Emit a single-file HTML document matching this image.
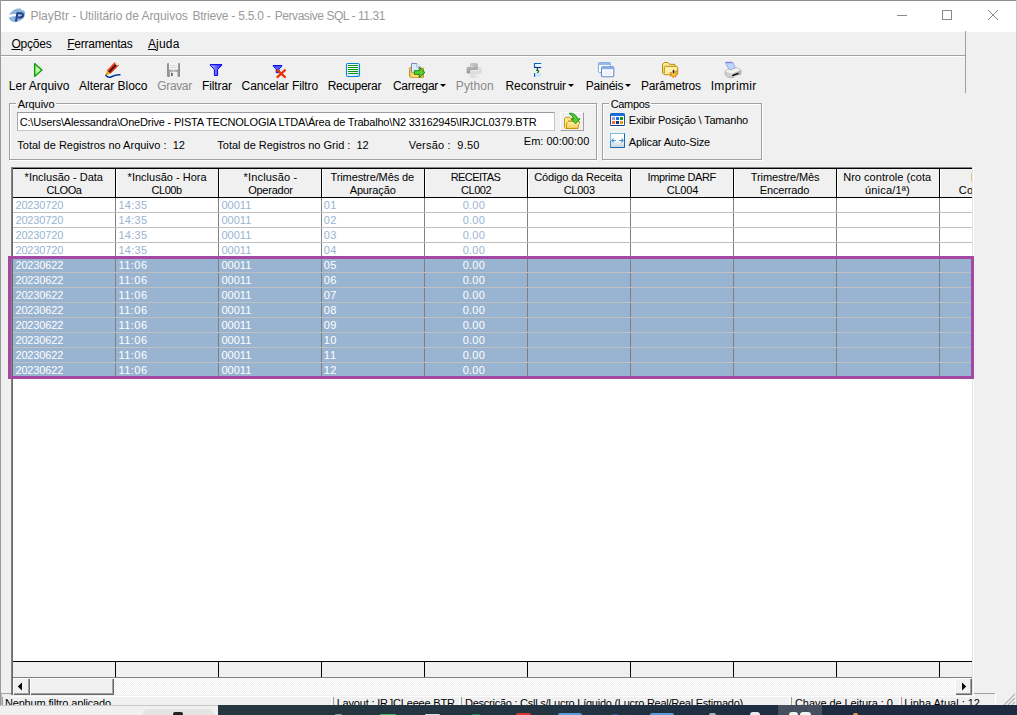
<!DOCTYPE html><html lang="pt"><head><meta charset="utf-8"><title>PlayBtr</title><style>
html,body{margin:0;padding:0}
body{width:1017px;height:715px;overflow:hidden;background:#f0f0f0;position:relative;font-family:"Liberation Sans",sans-serif;font-size:11px;color:#000}
.a{position:absolute}
.t{position:absolute;white-space:pre;font-size:11px;line-height:14px;height:14px}
.s{position:absolute;white-space:pre;font-size:12px;line-height:16px;height:16px}
.gb{position:absolute;border:1px solid #a0a0a0;box-shadow:1px 1px 0 #fff, inset 1px 1px 0 #fff}
.ic{position:absolute;top:62px;width:16px;height:16px;overflow:visible}
u{text-decoration:underline;text-underline-offset:1px;text-decoration-thickness:1px}
</style></head><body>
<div class="a" style="left:0;top:0;width:1017px;height:1px;background:#8e8e8e"></div>
<div class="a" style="left:0;top:0;width:1px;height:705px;background:#9a9a9a"></div>
<div class="a" style="left:1016px;top:0;width:1px;height:705px;background:#c8c8c8"></div>
<div class="a" style="left:1px;top:1px;width:1015px;height:31px;background:#fff"></div>
<div class="s" id="x0" style="left:30.5px;top:8px;color:#9a9a9a;letter-spacing:-0.045px">PlayBtr - Utilitário de Arquivos</div>
<div class="s" id="x1" style="left:192.5px;top:8px;color:#9a9a9a;letter-spacing:-0.237px">Btrieve - 5.5.0 -</div>
<div class="s" id="x2" style="left:274.7px;top:8px;color:#9a9a9a;letter-spacing:-0.433px">Pervasive SQL - 11.31</div>
<svg class="a" style="left:8px;top:7px" width="18" height="17" viewBox="8 7 18 17"><defs><linearGradient id="gti" x1="0" x2="1"><stop offset="0" stop-color="#fff"/><stop offset="0.55" stop-color="#fff" stop-opacity="0.900"/><stop offset="1" stop-color="#fff" stop-opacity="0"/></linearGradient></defs><ellipse cx="17" cy="15.300" rx="8.600" ry="6.300" fill="#8db5dc" transform="rotate(-28 17 15.300)"/><path d="M20.500 8.500Q21.500 11 25 10.500L24 8Z" fill="#fff"/><path d="M9 14.800Q14 13.600 21 14.300V16.200Q14 15.800 9 17.500Z" fill="url(#gti)"/><path d="M15.900 21.500L17.400 13.300H20.500Q23.700 13.300 23 15.600Q22.200 18 18 17.500" fill="none" stroke="#213f88" stroke-width="2"/></svg>
<svg class="a" style="left:890px;top:5px" width="120" height="22" viewBox="0 0 120 22"><g stroke="#8a8a8a" fill="none" stroke-width="1"><path d="M7 10.500H17"/><rect x="52.500" y="5.500" width="9" height="9"/><path d="M98 5L108 15M108 5L98 15"/></g></svg>
<div class="s" id="x3" style="left:11.4px;top:36px;letter-spacing:-0.179px"><u>O</u>pções</div>
<div class="s" id="x4" style="left:67.3px;top:36px;letter-spacing:-0.268px"><u>F</u>erramentas</div>
<div class="s" id="x5" style="left:147.9px;top:36px;letter-spacing:0.199px"><u>A</u>juda</div>
<div class="a" style="left:1px;top:55px;width:965px;height:1px;background:#a0a0a0"></div>
<div class="a" style="left:1px;top:56px;width:964px;height:1px;background:#fff"></div>
<div class="a" style="left:965px;top:31px;width:1px;height:62px;background:#a0a0a0"></div>
<svg class="ic" style="left:30px" viewBox="0 0 16 16"><defs><radialGradient id="gp" cx="0.45" cy="0.5" r="0.6"><stop offset="0" stop-color="#d8ffd0"/><stop offset="1" stop-color="#70e048"/></radialGradient></defs><path d="M4.600 1.600L12 8L4.600 14.400Z" fill="url(#gp)" stroke="#0c9c0c" stroke-width="1.300" stroke-linejoin="round"/></svg>
<div class="s" id="x6" style="left:8.8px;top:78px;color:#000;letter-spacing:-0.009px">Ler Arquivo</div>
<svg class="ic" style="left:105px" viewBox="0 0 16 16"><path d="M2 8.400L9.400 0.400L14 3.200L5.400 11.800Z" fill="#d42c10"/><path d="M2 8.400L9.400 0.400L10.600 1.100L3 9.500Z" fill="#f04a20"/><path d="M3.300 9.900L11 1.500L12.100 2.200L4.400 10.700Z" fill="#1a0a08"/><path d="M10.300 1.500L12.900 3.300" stroke="#fff" stroke-width="1.100"/><path d="M2 8.400L5.400 11.800L0.300 13.400Z" fill="#e8a800"/><path d="M0.300 13.400L1.500 12.200L1.900 12.900Z" fill="#202040"/><path d="M0.500 13.200Q3.500 16.500 7 14.500T15.500 12.800" stroke="#0c3a9c" fill="none" stroke-width="1.500"/></svg>
<div class="s" id="x7" style="left:79.0px;top:78px;color:#000;letter-spacing:-0.016px">Alterar Bloco</div>
<svg class="ic" style="left:165px" viewBox="0 0 16 16"><defs><linearGradient id="gs" x1="0" x2="1"><stop offset="0" stop-color="#8c8c8c"/><stop offset="0.5" stop-color="#bdbdbd"/><stop offset="1" stop-color="#8a8a8a"/></linearGradient></defs><rect x="2" y="1" width="13" height="14" rx="1.300" fill="url(#gs)"/><rect x="4" y="1" width="9" height="6.700" fill="#f6f6f6"/><path d="M5 3.500H12M5 5.500H12" stroke="#d8d8d8" stroke-width="1"/><rect x="5" y="9.800" width="7.500" height="5.200" fill="#f2f2f2"/><rect x="6" y="10.800" width="1.800" height="3.200" fill="#6a6a6a"/></svg>
<div class="s" id="x8" style="left:157.3px;top:78px;color:#8a8a8a;letter-spacing:-0.365px">Gravar</div>
<svg class="ic" style="left:208px" viewBox="0 0 16 16"><defs><linearGradient id="gf" x1="0" x2="1"><stop offset="0" stop-color="#b8b8ff"/><stop offset="1" stop-color="#2020f0"/></linearGradient></defs><path d="M2.300 2.500H13.700V3.500L9.600 7.300V13.500H6.400V7.300L2.300 3.500Z" fill="url(#gf)" stroke="#0a0ae8" stroke-width="1" stroke-linejoin="round"/><path d="M2 2.600H14" stroke="#1010f0" stroke-width="1.200"/></svg>
<div class="s" id="x9" style="left:201.9px;top:78px;color:#000;letter-spacing:-0.082px">Filtrar</div>
<svg class="ic" style="left:272px" viewBox="0 0 16 16"><path d="M1.200 3.500H9.800V4.300L7 7V10.700H4.200V7L1.200 4.300Z" fill="#5060f8" stroke="#0808e8" stroke-width="0.900" stroke-linejoin="round"/><path d="M1 3.600H10" stroke="#0808e8" stroke-width="1.200"/><path d="M4.800 7.600L13.600 15.600M13.600 7.600L4.800 15.600" stroke="#ec3000" stroke-width="2.100"/></svg>
<div class="s" id="x10" style="left:241.6px;top:78px;color:#000;letter-spacing:-0.109px">Cancelar Filtro</div>
<svg class="ic" style="left:345px" viewBox="0 0 16 16"><defs><linearGradient id="gr" x1="0" y1="0" x2="1" y2="1"><stop offset="0.3" stop-color="#ffffff"/><stop offset="1" stop-color="#b8dcff"/></linearGradient></defs><rect x="1.500" y="1.500" width="13" height="13" rx="1.600" fill="url(#gr)" stroke="#0a80d8" stroke-width="1.100"/><path d="M3.300 3.500H12.700M3.300 5.500H12.700M3.300 7.500H12.700M3.300 9.500H12.700M3.300 11.500H12.700" stroke="#0c960c" stroke-width="1.100" stroke-linecap="round"/></svg>
<div class="s" id="x11" style="left:327.7px;top:78px;color:#000;letter-spacing:-0.281px">Recuperar</div>
<svg class="ic" style="left:408px" viewBox="0 0 16 16"><path d="M1.500 6.200L2.700 5H5L6 6.200H15.500V15.300H2.500L1.500 14.300Z" fill="#f7c548" stroke="#bf8a14" stroke-width="0.900"/><path d="M3.500 1.500H8.800L12.300 5V10.500H3.500Z" fill="#d8ecff" stroke="#7878c0" stroke-width="0.900"/><path d="M8.800 1.500V5H12.300" fill="#fff" stroke="#8890c8" stroke-width="0.700"/><path d="M3.200 10.500H12.500V15H3.200Z" fill="#fcd968"/><path d="M6.300 8.700H11.200V5.300L16.900 10.400L11.200 15.600V12.300H6.300Z" fill="#58d030" stroke="#0a780a" stroke-width="0.900" stroke-linejoin="round"/></svg>
<div class="s" id="x12" style="left:392.9px;top:78px;color:#000;letter-spacing:-0.270px">Carregar</div>
<svg class="ic" style="left:465px" viewBox="0 0 16 16"><defs><linearGradient id="gy" x1="0" y1="0" x2="0" y2="1"><stop offset="0" stop-color="#c4c4c4"/><stop offset="1" stop-color="#989898"/></linearGradient></defs><path d="M6.500 1H11.500Q13 1 13 2.500V6.500Q13 8 11.500 8H6.500Q5 8 5 9.500V11.500H3Q1.600 11.500 1.600 10V6.200Q1.600 4.700 3 4.700H8.500V4H5V2.500Q5 1 6.500 1Z" fill="url(#gy)"/><path d="M11.500 15.800H6.500Q5 15.800 5 14.300V10.300Q5 8.800 6.500 8.800H11.500Q13 8.800 13 7.300V5.300H15.300Q16.800 5.300 16.800 6.800V10.600Q16.800 12.100 15.300 12.100H9.500V12.800H13V14.300Q13 15.800 11.500 15.800Z" fill="#dedede"/><rect x="6.200" y="2" width="1.600" height="1.200" fill="#d4d4d4"/><rect x="10.200" y="13.500" width="1.600" height="1.200" fill="#f4f4f4"/></svg>
<div class="s" id="x13" style="left:455.8px;top:78px;color:#8a8a8a;letter-spacing:0.107px">Python</div>
<svg class="ic" style="left:529px" viewBox="0 0 16 16"><rect x="5.500" y="1.500" width="7.500" height="4" fill="#eaf6ff"/><path d="M12.200 1.500H5.500V5.600" stroke="#0860d0" stroke-width="1.100" fill="none"/><path d="M5 5.500H12.200" stroke="#0a2a98" stroke-width="1.100"/><path d="M8.500 6V8.500M7 8.300Q9.800 8 9.500 9.600L8.300 10.800" stroke="#0a6a0a" stroke-width="1.200" fill="none"/><rect x="5" y="11" width="1.200" height="4" fill="#0860d0"/><rect x="7" y="11" width="5" height="4" fill="#cfe6ff"/></svg>
<div class="s" id="x14" style="left:505.5px;top:78px;color:#000;letter-spacing:-0.078px">Reconstruir</div>
<svg class="ic" style="left:597px" viewBox="0 0 16 16"><rect x="1.400" y="0.500" width="12" height="10" rx="1.200" fill="#fff" stroke="#7fa4dc" stroke-width="1"/><path d="M1.400 1.700Q1.400 0.500 2.600 0.500H12.200Q13.400 0.500 13.400 1.700V3H1.400Z" fill="#92b6e8"/><rect x="4.500" y="4.700" width="12.300" height="10" rx="1.200" fill="#fff" stroke="#5f88cc" stroke-width="1.100"/><path d="M4.500 5.900Q4.500 4.700 5.700 4.700H15.600Q16.800 4.700 16.800 5.900V7.300H4.500Z" fill="#86aee6"/><rect x="6.500" y="8.500" width="8.500" height="4.500" fill="#eef3fb"/></svg>
<div class="s" id="x15" style="left:585.8px;top:78px;color:#000;letter-spacing:-0.280px">Painéis</div>
<svg class="ic" style="left:662px" viewBox="0 0 16 16"><path d="M0.500 2.200L2.200 0.500H6L7.500 2.300H12.800V4.300H14.800L15.700 5.200V11L14 12.700H2.200L0.500 11Z" fill="#fbe894" stroke="#b88c10" stroke-width="1"/><path d="M2.300 11.500V5L3 4.300H12.800" fill="none" stroke="#b88c10" stroke-width="1"/><path d="M3 5H14.500V11.800H3Z" fill="#fdf0a8"/><path d="M11.500 7.500L12.600 9.600L14.800 8.800L14.200 11L16 12.300L13.900 13L14 15.300L12.100 14.100L11 16L10.300 13.900L8 14.200L9.300 12.300L7.700 10.600L10 10.500Z" fill="#f8a818" stroke="#d86a10" stroke-width="0.500"/><circle cx="11.600" cy="11.800" r="1.800" fill="#ffd840"/><rect x="10.900" y="8.200" width="1.300" height="3.400" fill="#1c2c78"/></svg>
<div class="s" id="x16" style="left:640.9px;top:78px;color:#000;letter-spacing:-0.203px">Parâmetros</div>
<svg class="ic" style="left:725px" viewBox="0 0 16 16"><path d="M0.600 1Q0.300 0.200 1.300 0.200H7.200Q8 0.200 8.300 1L10.300 6.200L4.500 8.200Z" fill="#b8d8ff" stroke="#8a8ad8" stroke-width="0.700"/><path d="M0.500 0.700H7.500" stroke="#7a7acc" stroke-width="1"/><path d="M0 9.200L4 6.800L4.500 8.200L10.300 6.200L11.500 5.600L16 8V12.200L7.500 15.800L3 15.300L0 12.600Z" fill="#d0d0d0" stroke="#9a9a9a" stroke-width="0.600"/><path d="M0.300 9.200L4 7.200L4.500 8.400L10.300 6.500L11.500 5.900L15.700 8.100L7.300 11.800Z" fill="#f2f2f2"/><path d="M7.300 12V15.700L15.800 12.100V8.200Z" fill="#b4b4b4"/><path d="M7.300 13.700L13.500 11.300" stroke="#000" stroke-width="1.300"/><path d="M8.500 15.200L13.500 13.300" stroke="#ececec" stroke-width="1"/></svg>
<div class="s" id="x17" style="left:710.7px;top:78px;color:#000;letter-spacing:0.309px">Imprimir</div>
<div class="a" style="left:440px;top:84px;width:0;height:0;border-left:3px solid transparent;border-right:3px solid transparent;border-top:3px solid #000"></div>
<div class="a" style="left:568px;top:84px;width:0;height:0;border-left:3px solid transparent;border-right:3px solid transparent;border-top:3px solid #000"></div>
<div class="a" style="left:625px;top:84px;width:0;height:0;border-left:3px solid transparent;border-right:3px solid transparent;border-top:3px solid #000"></div>
<div class="gb" style="left:9px;top:103px;width:586px;height:55px"></div>
<div class="a" style="left:16px;top:103px;width:40px;height:2px;background:#f0f0f0"></div>
<div class="t" id="x18" style="left:17.7px;top:97px;letter-spacing:-0.071px">Arquivo</div>
<div class="a" style="left:17px;top:112px;width:536px;height:17px;background:#fff;border:1px solid #7a7a7a;border-color:#9a9aa2 #c4c4cc #c4c4cc #a6a6ae"></div>
<div class="t" id="x19" style="left:19.7px;top:115px;letter-spacing:-0.190px">C:\Users\Alessandra\OneDrive - PISTA TECNOLOGIA LTDA\Área de Trabalho\N2 33162945\IRJCL0379.BTR</div>
<div class="a" style="left:560px;top:112px;width:22px;height:17px;background:#f0f0f0;border:1px solid #fff;border-color:#fff #a0a0a0 #a0a0a0 #fff"></div>
<svg class="a" style="left:560px;top:112px;overflow:visible" width="24" height="19" viewBox="0 0 24 19"><defs><linearGradient id="gfo" x1="0" y1="0" x2="0" y2="1"><stop offset="0" stop-color="#fff6b8"/><stop offset="1" stop-color="#f6c850"/></linearGradient></defs><path d="M4.500 6.500L5.700 5.300H9.500L10.700 6.500H17.300V9H4.500Z" fill="#fbe68a" stroke="#c8960c" stroke-width="1"/><path d="M4.500 7V15.500L5.500 16.500H17.500" fill="none" stroke="#c8960c" stroke-width="1"/><path d="M5 7.500H8V16H5Z" fill="#fbe68a"/><path d="M7.300 10.300L8.300 9.300H19.500V11.500L18.300 13V16.500H6.500V12Z" fill="url(#gfo)" stroke="#c8960c" stroke-width="1" stroke-linejoin="round"/><path d="M9 1.300H12.500Q16.500 3 17.800 7L20 6.800L15.600 11.800L11.200 7.300L13.700 7.200Q12.500 3.200 9 1.300Z" fill="#58cc38" stroke="#0c8c0c" stroke-width="0.900" stroke-linejoin="round"/></svg>
<div class="t" id="x20" style="left:17.3px;top:138px;letter-spacing:0.002px">Total de Registros no Arquivo :  12</div>
<div class="t" id="x21" style="left:217.3px;top:138px;letter-spacing:-0.008px">Total de Registros no Grid :  12</div>
<div class="t" id="x22" style="left:408.8px;top:138px;letter-spacing:0.208px">Versão :  9.50</div>
<div class="t" id="x23" style="left:523.8px;top:134px;letter-spacing:0.005px">Em: 00:00:00</div>
<div class="gb" style="left:602px;top:103px;width:158px;height:55px"></div>
<div class="a" style="left:609px;top:103px;width:42px;height:2px;background:#f0f0f0"></div>
<div class="t" id="x24" style="left:610.7px;top:97px;letter-spacing:-0.328px">Campos</div>
<div class="a" style="left:609px;top:126px;width:17px;height:2px;background:#fff"></div>
<svg class="a" style="left:610px;top:113px" width="15" height="13" viewBox="0 0 15 13"><rect x="0.500" y="0.500" width="14" height="12" rx="0.800" fill="#fff" stroke="#1c50a8"/><path d="M0.500 1.300Q0.500 0.500 1.300 0.500H13.700Q14.500 0.500 14.500 1.300V3H0.500Z" fill="#1a70dc"/><path d="M0.500 12.500H14.500" stroke="#123c90"/><rect x="2" y="4" width="3" height="3" fill="#9c9cd8"/><rect x="6" y="4" width="3" height="3" fill="#1878e0"/><rect x="10" y="4" width="3" height="3" fill="#129c12"/><rect x="2" y="8" width="3" height="3" fill="#ff6830"/><rect x="6" y="8" width="3" height="3" fill="#12309c"/><rect x="10" y="8" width="3" height="3" fill="#dca010"/></svg>
<div class="t" id="x25" style="left:628.8px;top:113px;letter-spacing:-0.197px">Exibir Posição \ Tamanho</div>
<svg class="a" style="left:610px;top:133px" width="15" height="15" viewBox="0 0 15 15"><defs><linearGradient id="gau" x1="0" y1="0" x2="0" y2="1"><stop offset="0.4" stop-color="#fff"/><stop offset="1" stop-color="#c4d4e0"/></linearGradient></defs><rect x="0.500" y="0.500" width="14" height="14" fill="url(#gau)" stroke="#80bce8"/><path d="M0.500 14.500H14.500V0.500" fill="none" stroke="#1c68b4"/><path d="M0.500 8V14.500" stroke="#3c88cc"/><path d="M1.800 7.500H5.800M3.600 5.500L1.800 7.500L3.600 9.500M9.200 7.500H13.200M11.400 5.500L13.200 7.500L11.400 9.500" stroke="#4690d4" fill="none" stroke-width="1.100"/></svg>
<div class="t" id="x26" style="left:628.8px;top:135px;letter-spacing:-0.151px">Aplicar Auto-Size</div>
<div class="a" style="left:11px;top:167px;width:962px;height:528px;background:#fff"></div>
<div class="a" style="left:972px;top:167px;width:1px;height:528px;background:#e3e3e3"></div>
<div class="a" style="left:973px;top:167px;width:1px;height:529px;background:#fff"></div>
<div class="a" style="left:11px;top:167px;width:961px;height:1px;background:#828282"></div>
<div class="a" style="left:11px;top:167px;width:1px;height:528px;background:#828282"></div>
<div class="a" style="left:12px;top:168px;width:960px;height:1px;background:#000"></div>
<div class="a" style="left:12px;top:168px;width:1px;height:527px;background:#696969"></div>
<div class="a" style="left:13px;top:169px;width:959px;height:28px;background:#f0f0f0"></div>
<div class="a" style="left:13px;top:197px;width:959px;height:1px;background:#000"></div>
<div class="t" id="x27" style="left:24.6px;top:170px;letter-spacing:0.008px">*Inclusão - Data</div>
<div class="t" id="x28" style="left:46.6px;top:183px;letter-spacing:-0.519px">CLOOa</div>
<div class="t" id="x29" style="left:127.6px;top:170px;letter-spacing:0.008px">*Inclusão - Hora</div>
<div class="t" id="x30" style="left:151.4px;top:183px;letter-spacing:-0.404px">CL00b</div>
<div class="t" id="x31" style="left:243.6px;top:170px;letter-spacing:0.156px">*Inclusão -</div>
<div class="t" id="x32" style="left:248.2px;top:183px;letter-spacing:-0.248px">Operador</div>
<div class="t" id="x33" style="left:330.5px;top:170px;letter-spacing:-0.098px">Trimestre/Mês de</div>
<div class="t" id="x34" style="left:349.7px;top:183px;letter-spacing:-0.137px">Apuração</div>
<div class="t" id="x35" style="left:450.7px;top:170px;letter-spacing:-0.588px">RECEITAS</div>
<div class="t" id="x36" style="left:460.9px;top:183px;letter-spacing:-0.404px">CL002</div>
<div class="t" id="x37" style="left:534.3px;top:170px;letter-spacing:-0.154px">Código da Receita</div>
<div class="t" id="x38" style="left:563.7px;top:183px;letter-spacing:-0.264px">CL003</div>
<div class="t" id="x39" style="left:647.5px;top:170px;letter-spacing:-0.353px">Imprime DARF</div>
<div class="t" id="x40" style="left:666.7px;top:183px;letter-spacing:-0.204px">CL004</div>
<div class="t" id="x41" style="left:750.8px;top:170px;letter-spacing:-0.090px">Trimestre/Mês</div>
<div class="t" id="x42" style="left:759.7px;top:183px;letter-spacing:-0.130px">Encerrado</div>
<div class="t" id="x43" style="left:843.2px;top:170px;letter-spacing:0.031px">Nro controle (cota</div>
<div class="t" id="x44" style="left:864.9px;top:183px;letter-spacing:0.209px">única/1ª)</div>
<div class="a" style="left:958px;top:183px;width:14px;height:14px;overflow:hidden"><div class="t" id="x45" style="left:0.7px;top:0px;letter-spacing:0.369px">Co</div></div>
<div class="a" style="left:971px;top:173px;width:1px;height:8px;background:#ecc078"></div>
<div class="a" style="left:115px;top:169px;width:1px;height:29px;background:#000"></div>
<div class="a" style="left:116px;top:169px;width:1px;height:28px;background:#fff"></div>
<div class="a" style="left:115px;top:198px;width:1px;height:180px;background:#808080"></div>
<div class="a" style="left:218px;top:169px;width:1px;height:29px;background:#000"></div>
<div class="a" style="left:219px;top:169px;width:1px;height:28px;background:#fff"></div>
<div class="a" style="left:218px;top:198px;width:1px;height:180px;background:#808080"></div>
<div class="a" style="left:321px;top:169px;width:1px;height:29px;background:#000"></div>
<div class="a" style="left:322px;top:169px;width:1px;height:28px;background:#fff"></div>
<div class="a" style="left:321px;top:198px;width:1px;height:180px;background:#808080"></div>
<div class="a" style="left:424px;top:169px;width:1px;height:29px;background:#000"></div>
<div class="a" style="left:425px;top:169px;width:1px;height:28px;background:#fff"></div>
<div class="a" style="left:424px;top:198px;width:1px;height:180px;background:#808080"></div>
<div class="a" style="left:527px;top:169px;width:1px;height:29px;background:#000"></div>
<div class="a" style="left:528px;top:169px;width:1px;height:28px;background:#fff"></div>
<div class="a" style="left:527px;top:198px;width:1px;height:180px;background:#808080"></div>
<div class="a" style="left:630px;top:169px;width:1px;height:29px;background:#000"></div>
<div class="a" style="left:631px;top:169px;width:1px;height:28px;background:#fff"></div>
<div class="a" style="left:630px;top:198px;width:1px;height:180px;background:#808080"></div>
<div class="a" style="left:733px;top:169px;width:1px;height:29px;background:#000"></div>
<div class="a" style="left:734px;top:169px;width:1px;height:28px;background:#fff"></div>
<div class="a" style="left:733px;top:198px;width:1px;height:180px;background:#808080"></div>
<div class="a" style="left:836px;top:169px;width:1px;height:29px;background:#000"></div>
<div class="a" style="left:837px;top:169px;width:1px;height:28px;background:#fff"></div>
<div class="a" style="left:836px;top:198px;width:1px;height:180px;background:#808080"></div>
<div class="a" style="left:939px;top:169px;width:1px;height:29px;background:#000"></div>
<div class="a" style="left:940px;top:169px;width:1px;height:28px;background:#fff"></div>
<div class="a" style="left:939px;top:198px;width:1px;height:180px;background:#808080"></div>
<div class="a" style="left:13px;top:258px;width:959px;height:120px;background:#99b4d1"></div>
<div class="a" style="left:115px;top:258px;width:1px;height:120px;background:#808080"></div>
<div class="a" style="left:218px;top:258px;width:1px;height:120px;background:#808080"></div>
<div class="a" style="left:321px;top:258px;width:1px;height:120px;background:#808080"></div>
<div class="a" style="left:424px;top:258px;width:1px;height:120px;background:#808080"></div>
<div class="a" style="left:527px;top:258px;width:1px;height:120px;background:#808080"></div>
<div class="a" style="left:630px;top:258px;width:1px;height:120px;background:#808080"></div>
<div class="a" style="left:733px;top:258px;width:1px;height:120px;background:#808080"></div>
<div class="a" style="left:836px;top:258px;width:1px;height:120px;background:#808080"></div>
<div class="a" style="left:939px;top:258px;width:1px;height:120px;background:#808080"></div>
<div class="a" style="left:13px;top:212px;width:959px;height:1px;background:#c0c0c0"></div>
<div class="a" style="left:13px;top:227px;width:959px;height:1px;background:#c0c0c0"></div>
<div class="a" style="left:13px;top:242px;width:959px;height:1px;background:#c0c0c0"></div>
<div class="a" style="left:13px;top:257px;width:959px;height:1px;background:#c0c0c0"></div>
<div class="a" style="left:13px;top:272px;width:959px;height:1px;background:#c0c0c0"></div>
<div class="a" style="left:13px;top:287px;width:959px;height:1px;background:#c0c0c0"></div>
<div class="a" style="left:13px;top:302px;width:959px;height:1px;background:#c0c0c0"></div>
<div class="a" style="left:13px;top:317px;width:959px;height:1px;background:#c0c0c0"></div>
<div class="a" style="left:13px;top:332px;width:959px;height:1px;background:#c0c0c0"></div>
<div class="a" style="left:13px;top:347px;width:959px;height:1px;background:#c0c0c0"></div>
<div class="a" style="left:13px;top:362px;width:959px;height:1px;background:#c0c0c0"></div>
<div class="a" style="left:13px;top:377px;width:959px;height:1px;background:#c0c0c0"></div>
<div class="t" id="x46" style="left:15.4px;top:198px;color:#99b4d1;letter-spacing:-0.132px">20230720</div>
<div class="t" id="x47" style="left:118.4px;top:198px;color:#99b4d1;letter-spacing:0.314px">14:35</div>
<div class="t" id="x48" style="left:221.4px;top:198px;color:#99b4d1;letter-spacing:0.024px">00011</div>
<div class="t" id="x49" style="left:323.8px;top:198px;color:#99b4d1;letter-spacing:0.375px">01</div>
<div class="t" id="x50" style="left:462.8px;top:198px;color:#99b4d1;letter-spacing:0.195px">0.00</div>
<div class="t" id="x51" style="left:15.4px;top:213px;color:#99b4d1;letter-spacing:-0.132px">20230720</div>
<div class="t" id="x52" style="left:118.4px;top:213px;color:#99b4d1;letter-spacing:0.314px">14:35</div>
<div class="t" id="x53" style="left:221.4px;top:213px;color:#99b4d1;letter-spacing:0.024px">00011</div>
<div class="t" id="x54" style="left:323.8px;top:213px;color:#99b4d1;letter-spacing:0.375px">02</div>
<div class="t" id="x55" style="left:462.8px;top:213px;color:#99b4d1;letter-spacing:0.195px">0.00</div>
<div class="t" id="x56" style="left:15.4px;top:228px;color:#99b4d1;letter-spacing:-0.132px">20230720</div>
<div class="t" id="x57" style="left:118.4px;top:228px;color:#99b4d1;letter-spacing:0.314px">14:35</div>
<div class="t" id="x58" style="left:221.4px;top:228px;color:#99b4d1;letter-spacing:0.024px">00011</div>
<div class="t" id="x59" style="left:323.8px;top:228px;color:#99b4d1;letter-spacing:0.375px">03</div>
<div class="t" id="x60" style="left:462.8px;top:228px;color:#99b4d1;letter-spacing:0.195px">0.00</div>
<div class="t" id="x61" style="left:15.4px;top:243px;color:#99b4d1;letter-spacing:-0.132px">20230720</div>
<div class="t" id="x62" style="left:118.4px;top:243px;color:#99b4d1;letter-spacing:0.314px">14:35</div>
<div class="t" id="x63" style="left:221.4px;top:243px;color:#99b4d1;letter-spacing:0.024px">00011</div>
<div class="t" id="x64" style="left:323.8px;top:243px;color:#99b4d1;letter-spacing:0.375px">04</div>
<div class="t" id="x65" style="left:462.8px;top:243px;color:#99b4d1;letter-spacing:0.195px">0.00</div>
<div class="t" id="x66" style="left:15.4px;top:258px;color:#fff;letter-spacing:-0.132px">20230622</div>
<div class="t" id="x67" style="left:118.4px;top:258px;color:#fff;letter-spacing:0.476px">11:06</div>
<div class="t" id="x68" style="left:221.4px;top:258px;color:#fff;letter-spacing:0.024px">00011</div>
<div class="t" id="x69" style="left:323.8px;top:258px;color:#fff;letter-spacing:0.375px">05</div>
<div class="t" id="x70" style="left:462.8px;top:258px;color:#fff;letter-spacing:0.195px">0.00</div>
<div class="t" id="x71" style="left:15.4px;top:273px;color:#fff;letter-spacing:-0.132px">20230622</div>
<div class="t" id="x72" style="left:118.4px;top:273px;color:#fff;letter-spacing:0.476px">11:06</div>
<div class="t" id="x73" style="left:221.4px;top:273px;color:#fff;letter-spacing:0.024px">00011</div>
<div class="t" id="x74" style="left:323.8px;top:273px;color:#fff;letter-spacing:0.375px">06</div>
<div class="t" id="x75" style="left:462.8px;top:273px;color:#fff;letter-spacing:0.195px">0.00</div>
<div class="t" id="x76" style="left:15.4px;top:288px;color:#fff;letter-spacing:-0.132px">20230622</div>
<div class="t" id="x77" style="left:118.4px;top:288px;color:#fff;letter-spacing:0.476px">11:06</div>
<div class="t" id="x78" style="left:221.4px;top:288px;color:#fff;letter-spacing:0.024px">00011</div>
<div class="t" id="x79" style="left:323.8px;top:288px;color:#fff;letter-spacing:0.375px">07</div>
<div class="t" id="x80" style="left:462.8px;top:288px;color:#fff;letter-spacing:0.195px">0.00</div>
<div class="t" id="x81" style="left:15.4px;top:303px;color:#fff;letter-spacing:-0.132px">20230622</div>
<div class="t" id="x82" style="left:118.4px;top:303px;color:#fff;letter-spacing:0.476px">11:06</div>
<div class="t" id="x83" style="left:221.4px;top:303px;color:#fff;letter-spacing:0.024px">00011</div>
<div class="t" id="x84" style="left:323.8px;top:303px;color:#fff;letter-spacing:0.375px">08</div>
<div class="t" id="x85" style="left:462.8px;top:303px;color:#fff;letter-spacing:0.195px">0.00</div>
<div class="t" id="x86" style="left:15.4px;top:318px;color:#fff;letter-spacing:-0.132px">20230622</div>
<div class="t" id="x87" style="left:118.4px;top:318px;color:#fff;letter-spacing:0.476px">11:06</div>
<div class="t" id="x88" style="left:221.4px;top:318px;color:#fff;letter-spacing:0.024px">00011</div>
<div class="t" id="x89" style="left:323.8px;top:318px;color:#fff;letter-spacing:0.375px">09</div>
<div class="t" id="x90" style="left:462.8px;top:318px;color:#fff;letter-spacing:0.195px">0.00</div>
<div class="t" id="x91" style="left:15.4px;top:333px;color:#fff;letter-spacing:-0.132px">20230622</div>
<div class="t" id="x92" style="left:118.4px;top:333px;color:#fff;letter-spacing:0.476px">11:06</div>
<div class="t" id="x93" style="left:221.4px;top:333px;color:#fff;letter-spacing:0.024px">00011</div>
<div class="t" id="x94" style="left:323.8px;top:333px;color:#fff;letter-spacing:0.375px">10</div>
<div class="t" id="x95" style="left:462.8px;top:333px;color:#fff;letter-spacing:0.195px">0.00</div>
<div class="t" id="x96" style="left:15.4px;top:348px;color:#fff;letter-spacing:-0.132px">20230622</div>
<div class="t" id="x97" style="left:118.4px;top:348px;color:#fff;letter-spacing:0.476px">11:06</div>
<div class="t" id="x98" style="left:221.4px;top:348px;color:#fff;letter-spacing:0.024px">00011</div>
<div class="t" id="x99" style="left:323.8px;top:348px;color:#fff;letter-spacing:0.789px">11</div>
<div class="t" id="x100" style="left:462.8px;top:348px;color:#fff;letter-spacing:0.195px">0.00</div>
<div class="t" id="x101" style="left:15.4px;top:363px;color:#fff;letter-spacing:-0.132px">20230622</div>
<div class="t" id="x102" style="left:118.4px;top:363px;color:#fff;letter-spacing:0.476px">11:06</div>
<div class="t" id="x103" style="left:221.4px;top:363px;color:#fff;letter-spacing:0.024px">00011</div>
<div class="t" id="x104" style="left:323.8px;top:363px;color:#fff;letter-spacing:0.375px">12</div>
<div class="t" id="x105" style="left:462.8px;top:363px;color:#fff;letter-spacing:0.195px">0.00</div>
<div class="a" style="left:8px;top:256px;width:960px;height:117px;border:3px solid #a349a4"></div>
<div class="a" style="left:13px;top:661px;width:959px;height:1px;background:#000"></div>
<div class="a" style="left:13px;top:662px;width:959px;height:15px;background:#f0f0f0"></div>
<div class="a" style="left:115px;top:662px;width:1px;height:15px;background:#000"></div>
<div class="a" style="left:218px;top:662px;width:1px;height:15px;background:#000"></div>
<div class="a" style="left:321px;top:662px;width:1px;height:15px;background:#000"></div>
<div class="a" style="left:424px;top:662px;width:1px;height:15px;background:#000"></div>
<div class="a" style="left:527px;top:662px;width:1px;height:15px;background:#000"></div>
<div class="a" style="left:630px;top:662px;width:1px;height:15px;background:#000"></div>
<div class="a" style="left:733px;top:662px;width:1px;height:15px;background:#000"></div>
<div class="a" style="left:836px;top:662px;width:1px;height:15px;background:#000"></div>
<div class="a" style="left:939px;top:662px;width:1px;height:15px;background:#000"></div>
<div class="a" style="left:13px;top:677px;width:959px;height:1px;background:#808080"></div>
<div class="a" style="left:13px;top:678px;width:959px;height:17px;background:repeating-conic-gradient(#fff 0% 25%,#f0f0f0 0% 50%) 0 0/2px 2px"></div>
<div class="a" style="left:13px;top:678px;width:16px;height:16px;background:#f0f0f0;box-shadow:inset 1px 1px 0 #fff, inset -1px -1px 0 #a0a0a0, 1px 1px 0 #696969"></div>
<div class="a" style="left:30px;top:678px;width:83px;height:16px;background:#f0f0f0;box-shadow:inset 1px 1px 0 #fff, inset -1px -1px 0 #a0a0a0, 1px 1px 0 #696969"></div>
<div class="a" style="left:955px;top:678px;width:16px;height:16px;background:#f0f0f0;box-shadow:inset 1px 1px 0 #fff, inset -1px -1px 0 #a0a0a0, 1px 1px 0 #696969"></div>
<svg class="a" style="left:0;top:670px" width="1017" height="30" viewBox="0 670 1017 30"><path d="M17.800 686.500L22 682.400V690.600Z M966.200 686.500L962 682.400V690.600Z" fill="#000"/></svg>
<div class="a" style="left:11px;top:696px;width:962px;height:1px;background:#fff"></div>
<div class="a" style="left:1px;top:693px;width:10px;height:1px;background:#a0a0a0"></div>
<div class="a" style="left:1px;top:693px;width:1px;height:12px;background:#b8b8b8"></div>
<div class="a" style="left:1px;top:696px;width:1015px;height:9px;overflow:hidden"><div class="t" id="x106" style="left:3.9px;top:0px;letter-spacing:-0.152px">Nenhum filtro aplicado</div><div class="t" id="x107" style="left:335.7px;top:0px;letter-spacing:-0.195px">Layout : IRJCLeeee.BTR</div><div class="t" id="x108" style="left:464.0px;top:0px;letter-spacing:-0.252px">Descrição : Csll s/Lucro Líquido (Lucro Real/Real Estimado)</div><div class="t" id="x109" style="left:794.0px;top:0px;letter-spacing:-0.069px">Chave de Leitura : 0</div><div class="t" id="x110" style="left:903.2px;top:0px;letter-spacing:-0.003px">Linha Atual : 12</div></div>
<div class="a" style="left:333px;top:697px;width:1px;height:8px;background:#a0a0a0"></div>
<div class="a" style="left:331px;top:697px;width:1px;height:8px;background:#fff"></div>
<div class="a" style="left:461px;top:697px;width:1px;height:8px;background:#a0a0a0"></div>
<div class="a" style="left:459px;top:697px;width:1px;height:8px;background:#fff"></div>
<div class="a" style="left:791px;top:697px;width:1px;height:8px;background:#a0a0a0"></div>
<div class="a" style="left:789px;top:697px;width:1px;height:8px;background:#fff"></div>
<div class="a" style="left:901px;top:697px;width:1px;height:8px;background:#a0a0a0"></div>
<div class="a" style="left:899px;top:697px;width:1px;height:8px;background:#fff"></div>
<div class="a" style="left:2px;top:697px;width:1px;height:8px;background:#a0a0a0"></div>
<div class="a" style="left:974px;top:693px;width:21px;height:1px;background:#a0a0a0"></div>
<div class="a" style="left:995px;top:693px;width:1px;height:12px;background:#fff"></div>
<svg class="a" style="left:1002px;top:692px" width="14" height="13" viewBox="0 0 14 13"><path d="M2 13L13 2M6 13L13 6M10 13L13 10" stroke="#b4b4b4" stroke-width="1.200"/></svg>
<div class="a" style="left:0;top:705px;width:1017px;height:10px;background:#f0f0f0"></div>
<div class="a" style="left:0;top:705px;width:218px;height:1px;background:#c8c8c8"></div>
<div class="a" style="left:143px;top:709px;width:71px;height:10px;background:#e4e4e4;border-radius:5px"></div>
<div class="a" style="left:173px;top:712px;width:10px;height:4px;background:#222;border-radius:2px"></div>
<div class="a" style="left:218px;top:705px;width:799px;height:10px;background:linear-gradient(90deg,#25383f,#223442 40%,#1e2b41 75%,#1e2b41)"></div>
<div class="a" style="left:778px;top:705px;width:44px;height:10px;background:#454f5d"></div>
<div class="a" style="left:335px;top:714px;width:7px;height:1px;background:#8a9498;border-radius:1px 1px 0 0"></div>
<div class="a" style="left:380px;top:714px;width:16px;height:1px;background:#3fb860;border-radius:1px 1px 0 0"></div>
<div class="a" style="left:425px;top:714px;width:15px;height:1px;background:#d8dcde;border-radius:1px 1px 0 0"></div>
<div class="a" style="left:472px;top:714px;width:8px;height:1px;background:#1f8a4a;border-radius:1px 1px 0 0"></div>
<div class="a" style="left:516px;top:713px;width:15px;height:2px;background:#d8382c;border-radius:2px 2px 0 0"></div>
<div class="a" style="left:558px;top:713px;width:24px;height:2px;background:#5a9bd8;border-radius:2px 2px 0 0"></div>
<div class="a" style="left:612px;top:714px;width:6px;height:1px;background:#2858a0;border-radius:1px 1px 0 0"></div>
<div class="a" style="left:650px;top:713px;width:24px;height:2px;background:#5a9bd8;border-radius:2px 2px 0 0"></div>
<div class="a" style="left:709px;top:713px;width:7px;height:2px;background:#a8b0b8;border-radius:2px 2px 0 0"></div>
<div class="a" style="left:750px;top:712px;width:10px;height:3px;background:#e8ecf0;border-radius:3px 3px 0 0"></div>
<div class="a" style="left:789px;top:712px;width:9px;height:3px;background:#f4f4f4;border-radius:3px 3px 0 0"></div>
<div class="a" style="left:800px;top:712px;width:11px;height:3px;background:#f4f4f4;border-radius:3px 3px 0 0"></div>
<div class="a" style="left:853px;top:713px;width:5px;height:2px;background:#e8a050;border-radius:2px 2px 0 0"></div>
</body></html>
